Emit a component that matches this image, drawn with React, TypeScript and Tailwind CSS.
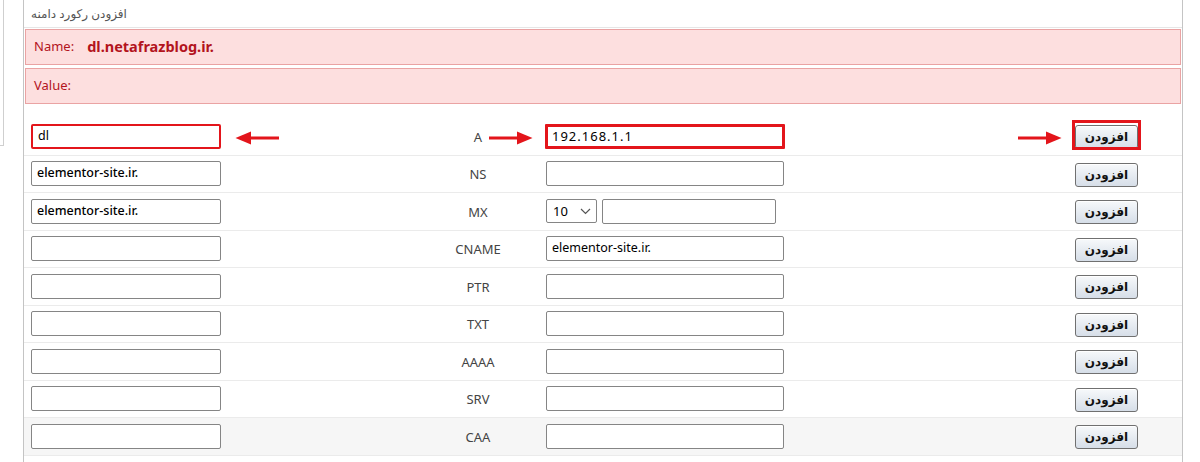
import React from "react";

const FONT = { fontFamily: '"Noto Sans", "DejaVu Sans", sans-serif' };

function Arrow({ dir, className }: { dir: "left" | "right"; className: string }) {
  return (
    <svg className={className} width="44" height="14" viewBox="0 0 44 14" fill="none">
      {dir === "right" ? (
        <>
          <line x1="0" y1="7" x2="34" y2="7" stroke="#e3151b" strokeWidth="3" />
          <path d="M28 0.5 L43.5 7 L28 13.5 Z" fill="#e3151b" />
        </>
      ) : (
        <>
          <line x1="10" y1="7" x2="44" y2="7" stroke="#e3151b" strokeWidth="3" />
          <path d="M16 0.5 L0.5 7 L16 13.5 Z" fill="#e3151b" />
        </>
      )}
    </svg>
  );
}

function Btn() {
  return (
    <button
      dir="rtl"
      className="w-[63px] h-[24px] rounded-[3px] border border-[#707070] bg-gradient-to-b from-[#f7f9fb] to-[#d6dee8] text-[12px] font-semibold text-[#111] leading-none shadow-[inset_0_1px_0_#ffffff]"
    >
      افزودن
    </button>
  );
}

function TextBox({ value = "", w = "w-[190px]", bold = false, red = false }: { value?: string; w?: string; bold?: boolean; red?: boolean }) {
  return (
    <div
      className={`${w} h-[25px] rounded-[2px] flex items-center px-[5px] text-[12.5px] text-black bg-white ${
        red ? "border-2 border-[#e3151b]" : "border border-[#858585]"
      } ${bold ? "font-medium" : ""}`}
    >
      {value}
    </div>
  );
}

type Row = { type: string; left: string; value?: string; mx?: boolean; gray?: boolean };

const rows: Row[] = [
  { type: "A", left: "" },
  { type: "NS", left: "elementor-site.ir." },
  { type: "MX", left: "elementor-site.ir.", mx: true },
  { type: "CNAME", left: "", value: "elementor-site.ir." },
  { type: "PTR", left: "" },
  { type: "TXT", left: "" },
  { type: "AAAA", left: "" },
  { type: "SRV", left: "" },
  { type: "CAA", left: "", gray: true },
];

export default function App() {
  return (
    <div className="w-[1200px] h-[462px] overflow-hidden bg-white flex" style={FONT}>
      {/* left stub panel */}
      <div className="w-[4px] h-[146px] border-r border-b border-[#cfcfcf] shrink-0" />
      <div className="w-[19px] shrink-0" />
      {/* main panel */}
      <div className="w-[1160px] h-full border-l border-r border-[#c4c4c4] flex flex-col relative">
        <div className="h-[28px] border-b border-[#e6e6e6] flex items-center px-[7px]">
          <span dir="rtl" className="text-[12px] text-[#555]">
            افزودن رکورد دامنه
          </span>
        </div>
        <div className="mx-[1px] mt-[1px] flex flex-col gap-[3px]">
          <div className="h-[36px] bg-[#fddfdf] border border-[#eaa3a3] flex items-center px-[8px] text-[13px] text-[#b3141d]">
            <span>Name:</span>
            <span className="ml-[13px] font-bold text-[14.5px]">dl.netafrazblog.ir.</span>
          </div>
          <div className="h-[36px] bg-[#fddfdf] border border-[#eaa3a3] flex items-center px-[8px] text-[13px] text-[#b3141d]">
            <span>Value:</span>
          </div>
        </div>
        <div className="mt-[14px] flex flex-col">
          {rows.map((r, i) => (
            <div
              key={r.type}
              className={`h-[37.5px] flex items-center border-b border-[#ebebeb] ${r.gray ? "bg-[#f6f6f6]" : ""}`}
            >
              <div className="w-[386px] pl-[7px] flex items-center">
                <TextBox value={i === 0 ? "dl" : r.left} bold={i !== 0} red={i === 0} />
              </div>
              <div className="w-[136px] text-center text-[13px] text-[#444] pt-[2px]">{r.type}</div>
              <div className="flex-1 flex items-center">
                {i === 0 ? (
                  <div className="w-[240px] h-[25px] border-[3px] border-[#e3151b] rounded-[1px] flex items-center px-[4px] text-[13px] tracking-[1px] text-black bg-white -ml-[1px]">
                    192.168.1.1
                  </div>
                ) : r.mx ? (
                  <div className="flex items-center gap-[5px]">
                    <div className="w-[51px] h-[24px] border border-[#858585] rounded-[2px] flex items-center justify-between pl-[6px] pr-[5px] text-[13px] text-black bg-white">
                      <span>10</span>
                      <svg width="11" height="7" viewBox="0 0 11 7">
                        <path d="M1 1 L5.5 5.5 L10 1" stroke="#555" strokeWidth="1.2" fill="none" />
                      </svg>
                    </div>
                    <TextBox w="w-[174px]" />
                  </div>
                ) : (
                  <TextBox w="w-[238px]" value={r.value ?? ""} />
                )}
              </div>
              <div className="mr-[44px] relative">
                <Btn />
                {i === 0 && (
                  <div className="absolute -left-[3px] -top-[3px] w-[69px] h-[30px] border-[3px] border-[#e3151b] pointer-events-none" />
                )}
              </div>
            </div>
          ))}
        </div>
        {/* annotation arrows */}
        <Arrow dir="left" className="absolute left-[211px] top-[131px]" />
        <Arrow dir="right" className="absolute left-[465px] top-[131px]" />
        <Arrow dir="right" className="absolute left-[994px] top-[131px]" />
      </div>
    </div>
  );
}
